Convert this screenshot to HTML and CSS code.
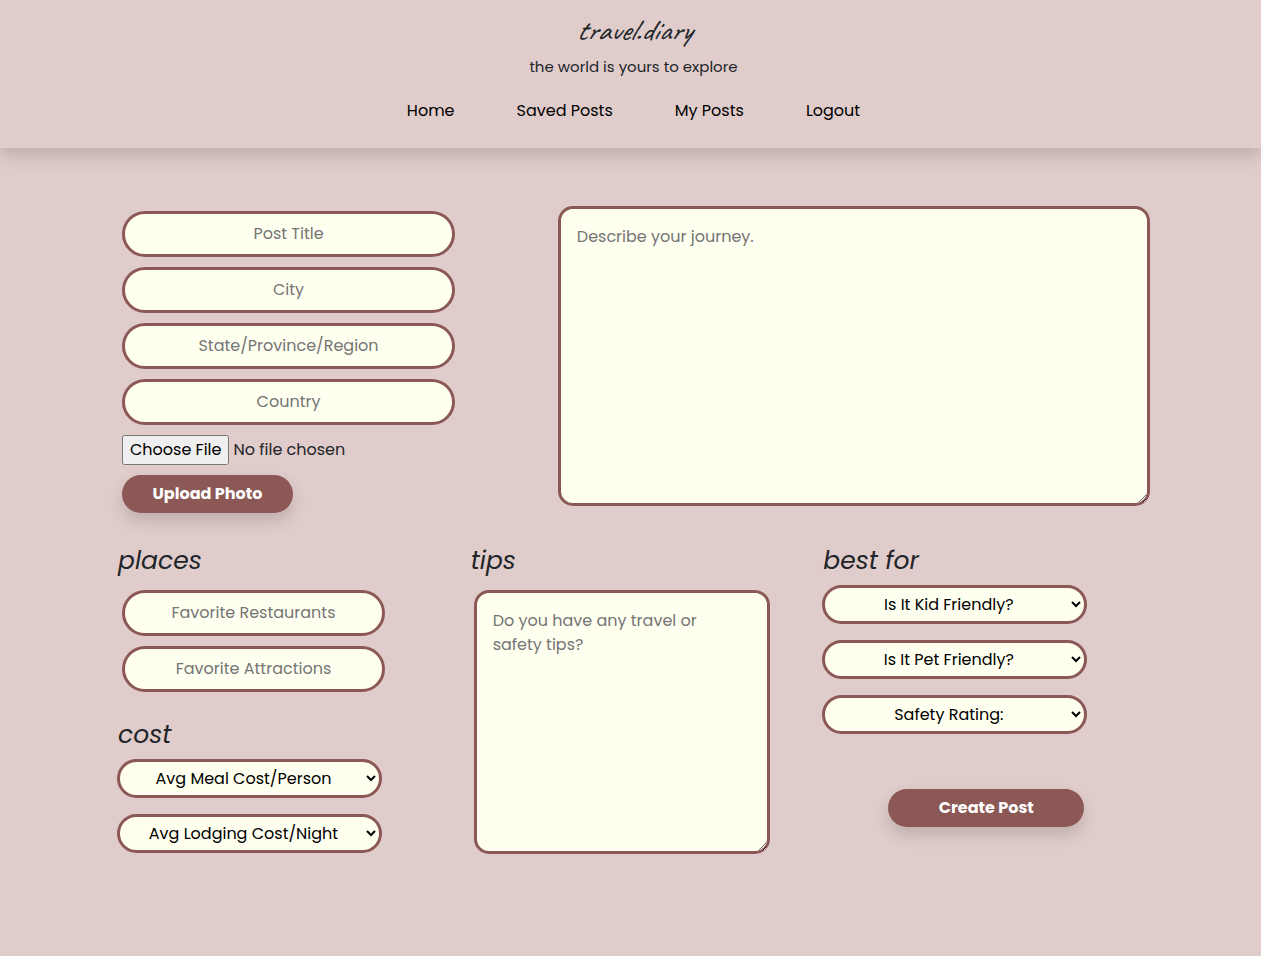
FILE: index.html
```html
<!DOCTYPE html>
<html lang="en">
<head>
<meta charset="utf-8">
<meta name="viewport" content="width=device-width, initial-scale=1">
<title>travel.diary</title>
<link rel="stylesheet" href="styles.css">
</head>
<body>
<header class="site-header">
  <h1 class="logo">travel.diary</h1>
  <p class="tagline">the world is yours to explore</p>
  <nav class="nav">
    <a href="#home">Home</a>
    <a href="#saved">Saved Posts</a>
    <a href="#mine">My Posts</a>
    <a href="#logout">Logout</a>
  </nav>
</header>
<main>
  <form class="post-form">
    <div class="intro">
      <div class="fields">
        <input class="field" type="text" placeholder="Post Title" aria-label="Post Title">
        <input class="field" type="text" placeholder="City" aria-label="City">
        <input class="field" type="text" placeholder="State/Province/Region" aria-label="State/Province/Region">
        <input class="field" type="text" placeholder="Country" aria-label="Country">
        <input class="file" type="file" aria-label="Photo">
        <button class="button" type="button">Upload Photo</button>
      </div>
      <textarea class="area journey" placeholder="Describe your journey." aria-label="Describe your journey"></textarea>
    </div>
    <div class="details">
      <div class="column">
        <section>
          <h2 class="heading">places</h2>
          <div class="fields places">
            <input class="field" type="text" placeholder="Favorite Restaurants" aria-label="Favorite Restaurants">
            <input class="field" type="text" placeholder="Favorite Attractions" aria-label="Favorite Attractions">
          </div>
        </section>
        <section class="cost">
          <h2 class="heading">cost</h2>
          <div class="choices">
            <select class="choice" aria-label="Average meal cost per person"><option>Avg Meal Cost/Person</option></select>
            <select class="choice" aria-label="Average lodging cost per night"><option>Avg Lodging Cost/Night</option></select>
          </div>
        </section>
      </div>
      <section class="column">
        <h2 class="heading">tips</h2>
        <textarea class="area tips" placeholder="Do you have any travel or safety tips?" aria-label="Travel or safety tips"></textarea>
      </section>
      <section class="column">
        <h2 class="heading">best for</h2>
        <div class="choices">
          <select class="choice" aria-label="Is it kid friendly?"><option>Is It Kid Friendly?</option></select>
          <select class="choice" aria-label="Is it pet friendly?"><option>Is It Pet Friendly?</option></select>
          <select class="choice" aria-label="Safety rating"><option>Safety Rating:</option></select>
        </div>
        <button class="button create" type="submit">Create Post</button>
      </section>
    </div>
  </form>
</main>
</body>
</html>
```
FILE: styles.css
```css
* { box-sizing: border-box; }

body {
  margin: 0;
  min-height: 100vh;
  background: #e0cccb;
  color: #212529;
  font: 16px/24px Poppins, Inter, sans-serif;
}

input, select, textarea, button { font: inherit; margin: 0; }

.site-header {
  display: flex;
  flex-direction: column;
  align-items: center;
  padding: 12px 0 25px 6px;
  box-shadow: 0 8px 16px rgba(0, 0, 0, 0.15);
}

.logo {
  margin: 0 0 7px;
  font: italic 500 30px/36px Caveat, Lato, cursive;
}

.tagline { margin: 0 0 20px; font-size: 15px; }

.nav { display: flex; gap: 62px; }
.nav a { color: #000; text-decoration: none; }

.post-form { padding: 58px 86px 100px 117px; }

.intro { display: grid; grid-template-columns: 5fr 7fr; }

.fields {
  display: flex;
  flex-direction: column;
  align-items: flex-start;
  gap: 10px;
  padding: 5px;
}

.field {
  width: 333px;
  max-width: 100%;
  height: 46px;
  padding: 7px 16px 9px;
  border: 3px solid #8b5855;
  border-radius: 24px;
  background: #fffff0;
  text-align: center;
}

.field::placeholder, .area::placeholder { color: #757575; }

.file { height: 30px; max-width: 100%; }
.file::file-selector-button { font: inherit; height: 30px; padding: 0 6px 2px; }

.button {
  height: 38px;
  width: 171px;
  border: 0;
  border-radius: 20px;
  background: #8b5855;
  color: #fff;
  font-weight: 700;
  box-shadow: 0 8px 16px rgba(0, 0, 0, 0.15);
}

.area {
  display: block;
  padding: 16px 20px 16px 16px;
  border: 3px solid #8b5855;
  border-radius: 15px;
  background: #fffff0;
}

.journey { width: 96%; height: 300px; }

.details {
  display: grid;
  grid-template-columns: repeat(3, 1fr);
  padding-top: 27px;
}

.heading {
  margin: 0 0 8px;
  padding-left: 1px;
  font-size: 25px;
  line-height: 32px;
  font-weight: 400;
  font-style: italic;
}

.places .field { width: 263px; }
.cost { padding-top: 22px; }

.choices { display: flex; flex-direction: column; gap: 16px; }

.choice {
  width: 265px;
  max-width: 100%;
  height: 39px;
  border: 3px solid #8b5855;
  border-radius: 20px;
  background: #fffff0;
  color: #000;
  text-align: center;
}

.tips { width: 84%; height: 264px; margin: 13px 0 0 4px; }

.create { display: block; width: 196px; margin: 55px 0 0 66px; }
```
